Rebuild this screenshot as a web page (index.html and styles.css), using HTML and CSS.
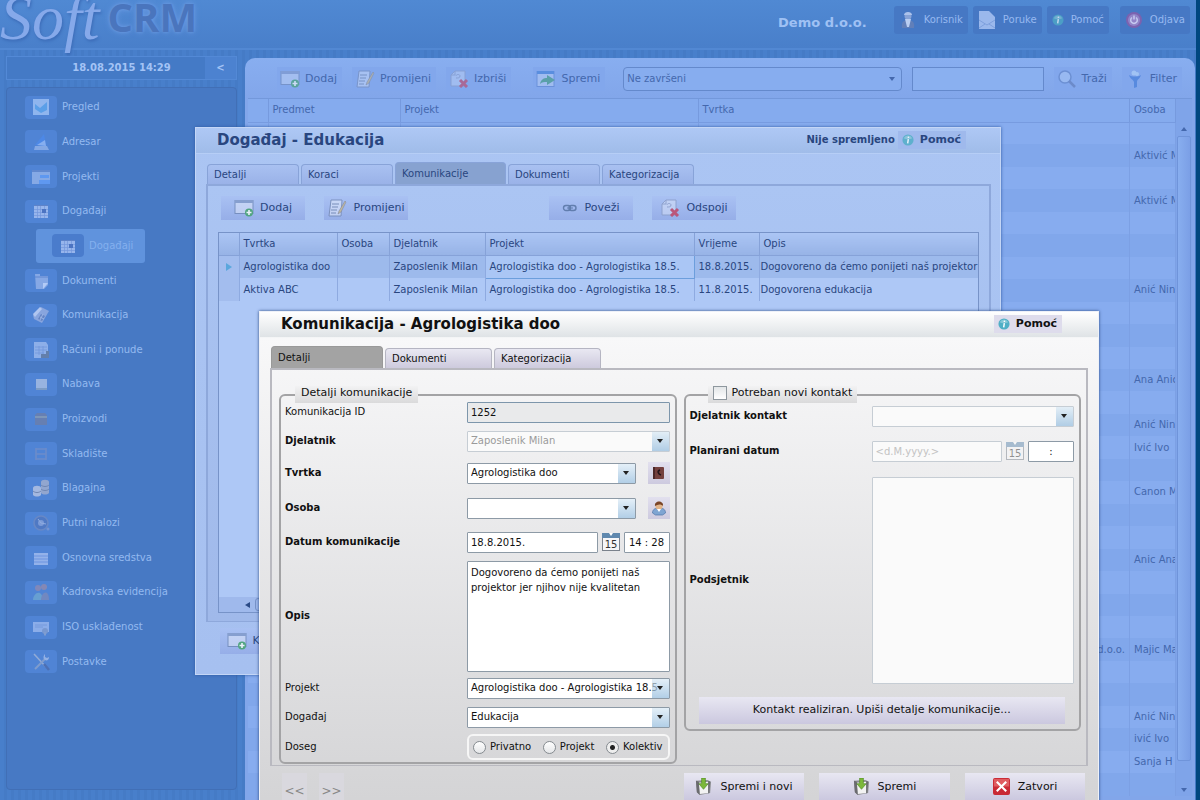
FILE: index.html
```html
<!DOCTYPE html>
<html lang="hr">
<head>
    <meta charset="UTF-8">
    <meta name="viewport" content="width=device-width, initial-scale=1.0">
    <title>SoftCRM</title>
    <link rel="stylesheet" href="styles.css">
</head>
<body>
    <!-- icons -->
    <svg class="sprite" aria-hidden="true">
        <symbol id="i-add" viewBox="0 0 20 18">
            <rect x="1" y="1.500" width="18" height="13" fill="#fff" fill-opacity=".45" stroke="#6f87b5"/>
            <rect x="1" y="1" width="18" height="3" fill="#7f98c8"/>
            <circle cx="15" cy="13.500" r="4" fill="#3fa267"/>
            <path d="M15 11v5M12.500 13.500h5" stroke="#fff" stroke-width="1.600"/>
        </symbol>
        <symbol id="i-edit" viewBox="0 0 20 18">
            <path d="M4 1h11l-1 16H2z" fill="#fff" fill-opacity=".5" stroke="#7388b3"/>
            <path d="M5 5h7M5 8h6M4 11h6M4 14h5" stroke="#6f84ad"/>
            <path d="M18 2l-6 10-1 3 3-2 5-10z" fill="#c9b98a" stroke="#7d7f8c" stroke-width=".6"/>
        </symbol>
        <symbol id="i-del" viewBox="0 0 20 18">
            <path d="M6 1h10v15H2V5z" fill="#fff" fill-opacity=".4" stroke="#8a9cc6"/>
            <path d="M2 5h4V1M7 6c0-2 4-2 4 0s-2 2-4 2" fill="none" stroke="#8a9cc6"/>
            <path d="M11 10l7 7M18 10l-7 7" stroke="#c2405f" stroke-width="3"/>
        </symbol>
        <symbol id="i-save2" viewBox="0 0 20 18">
            <rect x="1" y="1.500" width="17" height="15" fill="#fff" fill-opacity=".4" stroke="#5c84cf"/>
            <rect x="1" y="1" width="17" height="3" fill="#3f7fd8"/>
            <path d="M4 14c1-5 4-6 7-6V5l8 5-8 5v-3c-3 0-5 0-7 2z" fill="#419c7d"/>
        </symbol>
        <symbol id="i-find" viewBox="0 0 20 18">
            <circle cx="8" cy="7" r="6" fill="#a8c6f5" stroke="#5f82c4" stroke-width="1.500"/>
            <path d="M12 11l6 6" stroke="#5f79b5" stroke-width="2.500"/>
        </symbol>
        <symbol id="i-filter" viewBox="0 0 20 18">
            <circle cx="9" cy="3" r="2.500" fill="#b5d6fa"/><circle cx="12" cy="4" r="2" fill="#b5d6fa"/>
            <path d="M4 5c3 2 9 2 12 0-1 4-4 4-4 7v5l-3 1v-6C8 9 5 9 4 5z" fill="#3c78d8"/>
        </symbol>
        <symbol id="i-info" viewBox="0 0 14 14">
            <circle cx="7" cy="7" r="6.500" fill="#4fafc6"/><path d="M2 5a5.500 5.500 0 0 1 10 0c-3 1.500-7 1.500-10 0z" fill="#fff" fill-opacity=".3"/>
            <circle cx="7.500" cy="3.800" r="1" fill="#fff"/><path d="M7.400 6l-.8 5" stroke="#fff" stroke-width="1.700"/>
        </symbol>
        <symbol id="i-link" viewBox="0 0 16 12">
            <rect x="1.500" y="3.500" width="7" height="5" rx="2.500" fill="none" stroke="#53709f" stroke-width="1.400"/>
            <rect x="7" y="3.500" width="7" height="5" rx="2.500" fill="none" stroke="#53709f" stroke-width="1.400"/>
            <path d="M5 6h6" stroke="#53709f"/>
        </symbol>
        <symbol id="i-user" viewBox="0 0 18 18">
            <circle cx="9" cy="5" r="3.500" fill="#8fa8da"/><path d="M5 4c0-4 8-4 8 0" fill="#b7cbf0"/>
            <path d="M3 17c-1-6 2-8 6-8s7 2 6 8z" fill="#6480b8"/><path d="M6 8h6l-2 8H8z" fill="#c6d8f7"/>
        </symbol>
        <symbol id="i-mail" viewBox="0 0 18 18">
            <path d="M1 0h10l6 6v12H1z" fill="#a4c0f1"/><path d="M1 9l8 5 8-5M1 17l6-4M17 17l-6-4" fill="none" stroke="#83a4e0"/>
        </symbol>
        <symbol id="i-power" viewBox="0 0 18 18">
            <circle cx="9" cy="9" r="8" fill="#8260ad"/><circle cx="9" cy="9" r="6" fill="#9a86c9"/>
            <path d="M7 6.500a3.300 3.300 0 1 0 4 0M9 4.500v4" fill="none" stroke="#d3d3f5" stroke-width="1.500"/>
        </symbol>
        <symbol id="i-book" viewBox="0 0 16 16">
            <rect x="2" y="2" width="11" height="12" rx="1" fill="#74403e"/><path d="M2 2h2v12H2z" fill="#4c2829"/>
            <path d="M9 5c-3 1-2 4 1 5" fill="none" stroke="#24141a" stroke-width="1.600"/>
        </symbol>
        <symbol id="i-person" viewBox="0 0 16 16">
            <path d="M1.500 13c0-4 3-5 6.500-5s6.500 1 6.500 5l-3 2h-7z" fill="#7fa5d2" stroke="#4f74a8" stroke-width=".7"/>
            <circle cx="8" cy="6" r="3.600" fill="#e2b58b"/><path d="M4 6C3 0 13 0 12 6c-2-2-5-2-8 0z" fill="#7a4527"/>
            <path d="M6 9l2 3 2-3z" fill="#fff"/>
        </symbol>
        <symbol id="i-cal" viewBox="0 0 18 18">
            <rect x=".5" y="1.500" width="17" height="16" fill="#f6f6f8" stroke="#7b828c"/>
            <rect x="0" y="0" width="18" height="5" fill="#5f88ae"/><path d="M7 0h4l-2 3z" fill="#fff"/>
            <text x="9" y="15" text-anchor="middle" class="cal-day">15</text>
        </symbol>
        <symbol id="i-disk" viewBox="0 0 18 18">
            <path d="M1 3l12-1 4 2-1 12-11 2-3-3z" fill="#8b8c90"/><path d="M4 5l10-1v12l-9 1z" fill="#f2f2f2"/>
            <path d="M1 3l3 1 1 14-3-3zM14 3l2 1-1 12-1 .500z" fill="#6a6b6f"/>
            <path d="M7 0h4v6h3l-5 6-5-6h3z" fill="#7cb83a" stroke="#44801b" stroke-width=".6"/>
        </symbol>
        <symbol id="i-close" viewBox="0 0 18 18">
            <rect x="0" y="0" width="18" height="18" rx="2" fill="#c92a35"/><path d="M1 1h16v8H1z" fill="#df5c60"/>
            <path d="M4 4l10 10M14 4L4 14" stroke="#fff" stroke-width="2.200"/>
        </symbol>
        <!-- side menu -->
        <symbol id="m-pregled" viewBox="0 0 18 18"><rect x="1" y="1" width="16" height="16" fill="#8fb5ee"/><path d="M3 6l5 4 7-6v8l-6 3-6-4z" fill="#5b9fe8"/></symbol>
        <symbol id="m-adresar" viewBox="0 0 18 18"><path d="M3 12l9-11 2 12z" fill="#4d88e6"/><path d="M5 12l8-5 1 6z" fill="#86aeef"/><path d="M3 13h12l2 4H2z" fill="#84a8e4"/></symbol>
        <symbol id="m-projekti" viewBox="0 0 18 18"><path d="M0 2h18v14H0z" fill="#86a9e5"/><path d="M0 2h18v2H0z" fill="#6188ce"/><path d="M8 7h9v3H8zM7 12h11v4H7z" fill="#5f98f0"/></symbol>
        <symbol id="m-kalendar" viewBox="0 0 18 18"><rect x="2" y="3" width="14" height="13" fill="#97b5ec"/><path d="M2 3.500h14" stroke="#5f83c8"/><path d="M2 7.500h14M2 10.500h14M2 13.500h14M5.500 4v12M8.500 4v12M12.500 4v12" stroke="#7297dc" stroke-width=".7"/><path d="M10 7h4v4h-4z" fill="#4c74c2"/></symbol>
        <symbol id="m-dokumenti" viewBox="0 0 18 18"><path d="M3 2h5v2h8v9l-4 4H4z" fill="#86a8e5"/><path d="M16 11h-5v6z" fill="#b3cbf6"/><path d="M3 5h13" stroke="#5f86d0"/></symbol>
        <symbol id="m-telefon" viewBox="0 0 18 18"><path d="M1 9l8-8 8 4-7 12-8-4z" fill="#88a5de"/><path d="M1 8l7-7 2 2-7 8z" fill="#b0c6f0"/><path d="M9 8l4 2-3 5-4-2z" fill="#6484c4"/><path d="M8 11l4 2M11 8l-3 6" stroke="#9bb4e5"/></symbol>
        <symbol id="m-racuni" viewBox="0 0 18 18"><path d="M2 1h12l2 3v13H2z" fill="#8dafe9"/><path d="M3 6h12M3 9h12M3 12h9M7 5v9M11 5v9" stroke="#7197da" stroke-width=".8"/><path d="M9 17v-4h5v-3h3v7z" fill="#637fab"/></symbol>
        <symbol id="m-nabava" viewBox="0 0 18 18"><rect x="4" y="4" width="11" height="11" fill="#97b3e0"/><path d="M4 14h11" stroke="#7293bd" stroke-width="1.500"/></symbol>
        <symbol id="m-proizvodi" viewBox="0 0 18 18"><path d="M3 5l2-2h8l2 2v10H3z" fill="#667fb2"/><path d="M3 6h12v2H3z" fill="#7d96b8"/></symbol>
        <symbol id="m-skladiste" viewBox="0 0 18 18"><path d="M4 3v12M14 3v12M4 4h10M4 9h10M4 14h10" stroke="#6c8cca" stroke-width="1.600"/></symbol>
        <symbol id="m-blagajna" viewBox="0 0 18 18"><path d="M9 3c0-3 8-3 8 0v11c-2 2-6 2-8 0z" fill="#92a6cf"/><path d="M1 9c0-3 8-3 8 0v7c-2 2-6 2-8 0z" fill="#a3b8e0"/><path d="M9 6c2 2 6 2 8 0M9 10c2 2 6 2 8 0M1 12c2 2 6 2 8 0" fill="none" stroke="#7187b2"/></symbol>
        <symbol id="m-putni" viewBox="0 0 18 18"><circle cx="9" cy="9" r="7" fill="#4f79c4" stroke="#6788c6" stroke-width="1.600"/><circle cx="9" cy="9" r="3" fill="#7b9bd8"/><path d="M9 9l5 1M6 5l3 4" stroke="#8fabdf"/><circle cx="16" cy="15" r="1.500" fill="#7494d2"/></symbol>
        <symbol id="m-osnovna" viewBox="0 0 18 18"><rect x="2" y="4" width="14" height="12" fill="#93b2ea"/><path d="M2 7h14M2 10h14M2 13h14" stroke="#6d94e0"/></symbol>
        <symbol id="m-kadrovi" viewBox="0 0 18 18"><circle cx="6" cy="5" r="3" fill="#8088ba"/><circle cx="12" cy="4" r="3" fill="#8488b5"/><path d="M1 17c0-7 9-12 10 0z" fill="#679fd2"/><path d="M9 17c0-8 8-12 8 0z" fill="#7188c0"/></symbol>
        <symbol id="m-iso" viewBox="0 0 18 18"><rect x="1" y="4" width="16" height="10" fill="#8bade9"/><path d="M3 7h12M3 9h8" stroke="#7599dc"/><circle cx="13" cy="13" r="3" fill="#7898d0"/><path d="M12 14v4l1-1 1 1v-4z" fill="#7f9dd0"/></symbol>
        <symbol id="m-postavke" viewBox="0 0 18 18"><path d="M2 1l12 13" stroke="#92abd6" stroke-width="1.500"/><path d="M12 11l5 6" stroke="#4d70b4" stroke-width="2.600"/><path d="M3 16L13 6" stroke="#7f9ccd" stroke-width="2"/><path d="M13 1c-2 2-2 5 0 6s4 0 4-3l-2 1-2-1z" fill="#92b0e4"/></symbol>
    </svg>

    <div class="app">
        <header class="header">
            <h1 class="logo"><span class="logo-soft">Soft</span><span class="logo-crm">CRM</span></h1>
            <strong class="company">Demo d.o.o.</strong>
            <nav class="top-nav">
                <button type="button"><svg><use href="#i-user"/></svg>Korisnik</button>
                <button type="button"><svg><use href="#i-mail"/></svg>Poruke</button>
                <button type="button"><svg class="small"><use href="#i-info"/></svg>Pomoć</button>
                <button type="button" class="logout"><svg><use href="#i-power"/></svg>Odjava</button>
            </nav>
        </header>

        <div class="layout">
            <aside class="side">
                <div class="clock"><time>18.08.2015 14:29</time><button type="button">&lt;</button></div>
                <nav class="menu">
                    <ul>
                        <li><a href="#"><span class="ico"><svg><use href="#m-pregled"/></svg></span>Pregled</a></li>
                        <li><a href="#"><span class="ico"><svg><use href="#m-adresar"/></svg></span>Adresar</a></li>
                        <li><a href="#"><span class="ico"><svg><use href="#m-projekti"/></svg></span>Projekti</a></li>
                        <li><a href="#"><span class="ico"><svg><use href="#m-kalendar"/></svg></span>Događaji</a></li>
                        <li class="sub"><a href="#"><span class="ico"><svg><use href="#m-kalendar"/></svg></span>Događaji</a></li>
                        <li><a href="#"><span class="ico"><svg><use href="#m-dokumenti"/></svg></span>Dokumenti</a></li>
                        <li><a href="#"><span class="ico"><svg><use href="#m-telefon"/></svg></span>Komunikacija</a></li>
                        <li><a href="#"><span class="ico"><svg><use href="#m-racuni"/></svg></span>Računi i ponude</a></li>
                        <li><a href="#"><span class="ico"><svg><use href="#m-nabava"/></svg></span>Nabava</a></li>
                        <li><a href="#"><span class="ico"><svg><use href="#m-proizvodi"/></svg></span>Proizvodi</a></li>
                        <li><a href="#"><span class="ico"><svg><use href="#m-skladiste"/></svg></span>Skladište</a></li>
                        <li><a href="#"><span class="ico"><svg><use href="#m-blagajna"/></svg></span>Blagajna</a></li>
                        <li><a href="#"><span class="ico"><svg><use href="#m-putni"/></svg></span>Putni nalozi</a></li>
                        <li><a href="#"><span class="ico"><svg><use href="#m-osnovna"/></svg></span>Osnovna sredstva</a></li>
                        <li><a href="#"><span class="ico"><svg><use href="#m-kadrovi"/></svg></span>Kadrovska evidencija</a></li>
                        <li><a href="#"><span class="ico"><svg><use href="#m-iso"/></svg></span>ISO usklađenost</a></li>
                        <li><a href="#"><span class="ico"><svg><use href="#m-postavke"/></svg></span>Postavke</a></li>
                    </ul>
                </nav>
            </aside>

            <main class="main">
                <div class="toolbar">
                    <button type="button"><svg><use href="#i-add"/></svg>Dodaj</button>
                    <button type="button"><svg><use href="#i-edit"/></svg>Promijeni</button>
                    <button type="button"><svg><use href="#i-del"/></svg>Izbriši</button>
                    <button type="button" class="save"><svg><use href="#i-save2"/></svg>Spremi</button>
                    <div class="combo filter-combo">
                        <select aria-label="Status"><option>Ne završeni</option></select>
                    </div>
                    <input type="text" class="search" aria-label="Traži">
                    <button type="button"><svg><use href="#i-find"/></svg>Traži</button>
                    <button type="button"><svg><use href="#i-filter"/></svg>Filter</button>
                </div>
                <div class="grid-area">
                    <table class="grid">
                        <colgroup><col class="c-sel"><col class="c-predmet"><col class="c-projekt"><col><col class="c-osoba"></colgroup>
                        <thead><tr><th></th><th>Predmet</th><th>Projekt</th><th>Tvrtka</th><th>Osoba</th></tr></thead>
                        <tbody>
                            <tr><td></td><td></td><td></td><td></td><td></td></tr>
                            <tr><td></td><td></td><td></td><td></td><td>Aktivić Marko</td></tr>
                            <tr><td></td><td></td><td></td><td></td><td></td></tr>
                            <tr><td></td><td></td><td></td><td></td><td>Aktivić Marko</td></tr>
                            <tr><td></td><td></td><td></td><td></td><td></td></tr>
                            <tr><td></td><td></td><td></td><td></td><td></td></tr>
                            <tr><td></td><td></td><td></td><td></td><td></td></tr>
                            <tr><td></td><td></td><td></td><td></td><td>Anić Nina</td></tr>
                            <tr><td></td><td></td><td></td><td></td><td></td></tr>
                            <tr><td></td><td></td><td></td><td></td><td></td></tr>
                            <tr><td></td><td></td><td></td><td></td><td></td></tr>
                            <tr><td></td><td></td><td></td><td></td><td>Ana Anić</td></tr>
                            <tr><td></td><td></td><td></td><td></td><td></td></tr>
                            <tr><td></td><td></td><td></td><td></td><td>Anić Nina</td></tr>
                            <tr><td></td><td></td><td></td><td></td><td>Ivić Ivo</td></tr>
                            <tr><td></td><td></td><td></td><td></td><td></td></tr>
                            <tr><td></td><td></td><td></td><td></td><td>Canon M</td></tr>
                            <tr><td></td><td></td><td></td><td></td><td></td></tr>
                            <tr><td></td><td></td><td></td><td></td><td></td></tr>
                            <tr><td></td><td></td><td></td><td></td><td>Anic Ana</td></tr>
                            <tr><td></td><td></td><td></td><td></td><td></td></tr>
                            <tr><td></td><td></td><td></td><td></td><td></td></tr>
                            <tr><td></td><td></td><td></td><td></td><td></td></tr>
                            <tr><td></td><td></td><td></td><td class="right">d.o.o.</td><td>Majic Maja</td></tr>
                            <tr><td></td><td></td><td></td><td></td><td></td></tr>
                            <tr><td></td><td></td><td></td><td></td><td></td></tr>
                            <tr><td></td><td></td><td></td><td></td><td>Anić Nina</td></tr>
                            <tr><td></td><td></td><td></td><td></td><td>ivić Ivo</td></tr>
                            <tr><td></td><td></td><td></td><td></td><td>Sanja H</td></tr>
                            <tr><td></td><td></td><td></td><td></td><td></td></tr>
                        </tbody>
                    </table>
                    <div class="vscroll"><i class="arrow up"></i><i class="thumb"></i><i class="arrow"></i></div>
                </div>
            </main>
        </div>

        <!-- event window -->
        <section class="window event">
            <header class="title-bar">
                <h2>Događaj - Edukacija</h2>
                <span class="unsaved">Nije spremljeno</span>
                <button type="button" class="help"><svg><use href="#i-info"/></svg>Pomoć</button>
            </header>
            <div class="tabs">
                <button type="button">Detalji</button>
                <button type="button">Koraci</button>
                <button type="button" class="active">Komunikacije</button>
                <button type="button">Dokumenti</button>
                <button type="button">Kategorizacija</button>
            </div>
            <div class="tab-panel">
                <div class="actions">
                    <button type="button"><svg><use href="#i-add"/></svg>Dodaj</button>
                    <button type="button"><svg><use href="#i-edit"/></svg>Promijeni</button>
                    <button type="button" class="connect"><svg class="link"><use href="#i-link"/></svg>Poveži</button>
                    <button type="button"><svg><use href="#i-del"/></svg>Odspoji</button>
                </div>
                <div class="list">
                    <table>
                        <colgroup><col class="c-mark"><col class="c-tvrtka"><col class="c-os"><col class="c-djelatnik"><col class="c-proj"><col class="c-vrijeme"><col></colgroup>
                        <thead><tr><th></th><th>Tvrtka</th><th>Osoba</th><th>Djelatnik</th><th>Projekt</th><th>Vrijeme</th><th>Opis</th></tr></thead>
                        <tbody>
                            <tr class="selected"><td><i class="marker"></i></td><td>Agrologistika doo</td><td></td><td>Zaposlenik Milan</td><td class="focus">Agrologistika doo - Agrologistika 18.5.</td><td>18.8.2015.</td><td class="desc">Dogovoreno da ćemo ponijeti naš projektor</td></tr>
                            <tr><td></td><td>Aktiva ABC</td><td></td><td>Zaposlenik Milan</td><td>Agrologistika doo - Agrologistika 18.5.</td><td>11.8.2015.</td><td class="desc">Dogovorena edukacija</td></tr>
                        </tbody>
                    </table>
                    <div class="hscroll"><i class="arrow left"></i><i class="thumb"></i></div>
                </div>
            </div>
            <footer class="event-foot">
                <button type="button"><svg><use href="#i-add"/></svg>Komunikacija</button>
            </footer>
        </section>

        <!-- communication window -->
        <form class="window comm">
            <header class="title-bar">
                <h2>Komunikacija - Agrologistika doo</h2>
                <button type="button" class="help"><svg><use href="#i-info"/></svg>Pomoć</button>
            </header>
            <div class="tabs">
                <button type="button" class="active">Detalji</button>
                <button type="button">Dokumenti</button>
                <button type="button">Kategorizacija</button>
            </div>
            <div class="tab-panel">
                <fieldset>
                    <legend>Detalji komunikacije</legend>
                    <div class="fields details">
                        <label for="kid">Komunikacija ID</label>
                        <input type="text" id="kid" class="readonly" value="1252" readonly>

                        <label for="djelatnik" class="req">Djelatnik</label>
                        <div class="combo off"><select id="djelatnik" disabled><option>Zaposlenik Milan</option></select></div>

                        <label for="tvrtka" class="req">Tvrtka</label>
                        <div class="line wide">
                            <div class="combo"><select id="tvrtka"><option>Agrologistika doo</option></select></div>
                            <button type="button" class="icon-btn" aria-label="Adresar"><svg><use href="#i-book"/></svg></button>
                        </div>

                        <label for="osoba" class="req">Osoba</label>
                        <div class="line wide">
                            <div class="combo"><select id="osoba"><option></option></select></div>
                            <button type="button" class="icon-btn" aria-label="Osobe"><svg><use href="#i-person"/></svg></button>
                        </div>

                        <label for="datum" class="req">Datum komunikacije</label>
                        <div class="line">
                            <input type="text" id="datum" value="18.8.2015.">
                            <button type="button" class="cal-btn" aria-label="Kalendar"><svg><use href="#i-cal"/></svg></button>
                            <input type="text" class="time" value="14 : 28" aria-label="Vrijeme">
                        </div>

                        <label for="opis" class="req">Opis</label>
                        <textarea id="opis">Dogovoreno da ćemo ponijeti naš projektor jer njihov nije kvalitetan</textarea>

                        <label for="projekt">Projekt</label>
                        <div class="combo"><select id="projekt"><option>Agrologistika doo - Agrologistika 18.5</option></select></div>

                        <label for="dogadjaj">Događaj</label>
                        <div class="combo"><select id="dogadjaj"><option>Edukacija</option></select></div>

                        <span>Doseg</span>
                        <div class="scope" role="radiogroup" aria-label="Doseg">
                            <label><input type="radio" name="doseg">Privatno</label>
                            <label><input type="radio" name="doseg">Projekt</label>
                            <label><input type="radio" name="doseg" checked>Kolektiv</label>
                        </div>
                    </div>
                </fieldset>

                <fieldset class="next">
                    <legend><label><input type="checkbox">Potreban novi kontakt</label></legend>
                    <div class="fields contact">
                        <label for="kontakt" class="req">Djelatnik kontakt</label>
                        <div class="combo off"><select id="kontakt"><option></option></select></div>

                        <label for="plan" class="req">Planirani datum</label>
                        <div class="line">
                            <input type="text" id="plan" class="off" placeholder="&lt;d.M.yyyy.&gt;">
                            <button type="button" class="cal-btn off" aria-label="Kalendar"><svg><use href="#i-cal"/></svg></button>
                            <input type="text" class="time" value=":" aria-label="Vrijeme">
                        </div>

                        <label for="podsjetnik" class="req">Podsjetnik</label>
                        <textarea id="podsjetnik" class="off"></textarea>

                        <button type="button" class="btn done">Kontakt realiziran. Upiši detalje komunikacije...</button>
                    </div>
                </fieldset>
            </div>
            <footer class="form-foot">
                <button type="button" class="step">&lt;&lt;</button>
                <button type="button" class="step">&gt;&gt;</button>
                <div class="submit">
                    <button type="button" class="btn"><svg><use href="#i-disk"/></svg>Spremi i novi</button>
                    <button type="button" class="btn mid"><svg><use href="#i-disk"/></svg>Spremi</button>
                    <button type="button" class="btn"><svg><use href="#i-close"/></svg>Zatvori</button>
                </div>
            </footer>
        </form>
    </div>
</body>
</html>
```
FILE: styles.css
```css
* {
    box-sizing: border-box;
}

body {
    margin: 0;
    font-family: "DejaVu Sans", Verdana, sans-serif;
    font-size: 10px;
    line-height: 16px;
    overflow: hidden;
}

button, input, select, textarea {
    font: inherit;
    color: inherit;
    margin: 0;
}

button {
    display: flex;
    align-items: center;
    border: 0;
    padding: 0;
    background: none;
    cursor: pointer;
    white-space: nowrap;
}

h1, h2 {
    margin: 0;
}

.sprite {
    position: absolute;
    width: 0;
    height: 0;
}

.cal-day {
    font-size: 10px;
    fill: #333;
}

.app {
    position: relative;
    display: flex;
    flex-direction: column;
    height: 100vh;
    border-right: 4px solid #00477f;
    background: repeating-linear-gradient(90deg, #487fcb 0, #487fcb 4px, #457bc6 4px, #457bc6 7px);
    overflow: hidden;
}

/* header */
.header {
    display: flex;
    align-items: flex-start;
    height: 50px;
    padding: 6px 6px 0 0;
    background: linear-gradient(#5089d3, #497fca);
    border-bottom: 2px solid #5288d3;
}

.logo {
    display: flex;
    align-items: flex-start;
    gap: 8px;
    flex: 1;
    height: 28px;
    font-weight: normal;
}

.logo-soft {
    font: italic 64px/24px "Liberation Serif", serif;
    color: #86a9ea;
    text-shadow: 1px 2px 3px #3c6cb8;
}

.logo-crm {
    font: bold 40px/22px "Open Sans", sans-serif;
    color: #4a75bd;
    text-shadow: 0 0 3px #6a9ae2, 0 0 6px #6a9ae2;
}

.company {
    margin-right: 27px;
    font-size: 13px;
    line-height: 34px;
    color: #9fc1f4;
}

.top-nav {
    display: flex;
    gap: 5px;
}

.top-nav button {
    height: 28px;
    padding: 0 5px;
    gap: 7px;
    border-radius: 3px;
    background: #4678c4;
    color: #96b8f0;
}

.top-nav svg {
    width: 18px;
    height: 20px;
    opacity: .9;
}

.top-nav .small {
    width: 12px;
    opacity: .7;
}

.top-nav .logout {
    margin-left: 6px;
}

/* sidebar */
.layout {
    display: flex;
    flex: 1;
    min-height: 0;
    gap: 8px;
    padding: 6px 1px 0 6px;
}

.side {
    display: flex;
    flex-direction: column;
    flex: 0 0 231px;
    gap: 7px;
    padding-bottom: 10px;
}

.clock {
    display: flex;
    height: 24px;
    border: 1px solid #5389d6;
    background: #447ac6;
    color: #a3c3f5;
    font-weight: bold;
    line-height: 22px;
    text-align: center;
}

.clock time {
    flex: 1;
    padding-left: 31px;
}

.clock button {
    width: 31px;
    justify-content: center;
    background: #4c82d0;
}

.menu {
    display: flex;
    flex: 1;
    padding: 2px 0 110px;
    border: 1px solid #416fb6;
    border-radius: 4px;
    background: #4779c4;
}

.menu ul {
    display: grid;
    grid-auto-rows: 1fr;
    flex: 1;
    margin: 0;
    padding: 0 0 0 18px;
    list-style: none;
}

.menu a {
    display: flex;
    align-items: center;
    gap: 5px;
    height: 100%;
    color: #94b9f0;
    text-decoration: none;
}

.ico {
    display: flex;
    justify-content: center;
    align-items: center;
    width: 32px;
    height: 23px;
    border-radius: 4px;
    background: #5084d5;
}

.ico svg {
    width: 18px;
    height: 18px;
}

.menu .sub {
    width: 109px;
    margin-left: 11px;
    padding-left: 16px;
    border-radius: 3px;
    background: #6093dd;
}

.menu .sub .ico {
    background: #4a7ccc;
}

.menu .sub a {
    color: #84b0ee;
}

/* main list */
.main {
    flex: 1;
    display: flex;
    flex-direction: column;
    min-width: 0;
    margin-top: 2px;
    padding: 0 3px;
    border-radius: 10px 10px 0 0;
    background: linear-gradient(#88aef0, #82a6ea 40px);
    color: #4468ad;
}

.toolbar {
    display: flex;
    align-items: center;
    gap: 10px;
    height: 40px;
    padding: 2px 10px 0 29px;
    font-size: 11px;
}

.toolbar button {
    height: 24px;
    padding: 0 5px 0 3px;
    gap: 5px;
    background: #82a7ec;
}

.toolbar svg {
    width: 20px;
    height: 18px;
    opacity: .6;
}

.toolbar .save {
    margin-left: 12px;
}

.filter-combo {
    flex: 1;
    margin-left: 8px;
    font-size: 10px;
}

.toolbar .filter-combo select {
    height: 24px;
    border: 1px solid #6489cc;
    border-radius: 4px;
    background: #87adef;
}

.toolbar .filter-combo::before {
    background: none;
}

.toolbar .filter-combo::after {
    border-top-color: #4468ad;
}

.search {
    width: 132px;
    height: 24px;
    border: 1px solid #6489cc;
    background: #8ab0f0;
}

.grid-area {
    display: flex;
    flex: 1;
    min-height: 0;
    padding-bottom: 4px;
    border-top: 1px solid #7398db;
}

table {
    width: 100%;
    border-collapse: collapse;
    table-layout: fixed;
}

th, td {
    padding: 0 0 0 4px;
    font-weight: normal;
    text-align: left;
    white-space: nowrap;
    overflow: hidden;
}

.grid {
    flex: 1;
    height: 100%;
}

.grid th {
    height: 23px;
    border-right: 1px solid #769ade;
    border-bottom: 1px solid #779be0;
    background: #85abee;
}

.grid td {
    height: 22px;
    line-height: 14px;
    border-right: 1px solid #7ca0e4;
}

.grid tbody tr:nth-child(even) {
    background: #81a7eb;
}

.grid tbody tr:nth-child(odd) {
    background: #87acef;
}

.grid .right {
    text-align: right;
    padding-right: 4px;
}

.c-sel {
    width: 20px;
}

.c-predmet {
    width: 132px;
}

.c-projekt {
    width: 298px;
}

.c-osoba {
    width: 46px;
}

.vscroll {
    display: flex;
    flex-direction: column;
    align-items: center;
    gap: 5px;
    width: 16px;
    padding: 28px 1px 4px;
    background: #7fa4e9;
}

.vscroll .thumb {
    flex: 1;
    width: 100%;
    margin-bottom: 22px;
    border: 1px solid #6f94da;
    border-radius: 2px;
    background: linear-gradient(90deg, #88aeef, #7b9fe6);
}

.arrow {
    border: 3px solid transparent;
    border-top: 4px solid #4468ad;
    border-bottom: 0;
}

.arrow.up {
    border-top: 0;
    border-bottom: 4px solid #4468ad;
}

.arrow.left {
    border: 3px solid transparent;
    border-right: 5px solid #2a4a86;
    border-left: 0;
}

/* windows */
.window {
    position: absolute;
    display: flex;
    flex-direction: column;
}

.title-bar {
    display: flex;
    align-items: center;
    height: 26px;
    padding: 0 36px 2px 21px;
}

.title-bar h2 {
    flex: 1;
    font-size: 15px;
    line-height: 24px;
}

.help {
    height: 18px;
    padding: 0 5px 0 4px;
    gap: 6px;
    font-size: 11px;
    font-weight: bold;
}

.help svg {
    width: 12px;
    height: 12px;
}

.tabs {
    display: flex;
    align-items: flex-end;
    gap: 2px;
    height: 30px;
    padding-left: 1px;
}

.tabs button {
    align-items: center;
    width: 92px;
    height: 20px;
    padding: 0 6px;
    border: 1px solid;
    border-bottom: 0;
    border-radius: 4px 4px 0 0;
}

.tabs .active {
    width: 111px;
    height: 22px;
}

.event {
    left: 195px;
    right: 195px;
    top: 127px;
    height: 548px;
    padding: 0 9px 0 10px;
    border: 1px solid #c4d6f6;
    background: linear-gradient(#abc5f3, #a6c0f0);
    box-shadow: 0 0 3px #2f5ba4;
    color: #29467f;
}

.event .title-bar {
    margin: 0 -9px 0 -10px;
    padding-right: 34px;
    background: linear-gradient(#aec8f5, #a0bce9);
    border-bottom: 1px solid #b6cef6;
}

.unsaved {
    margin-right: 3px;
    font-weight: bold;
}

.event .help {
    background: #9fb9ec;
}

.event svg {
    opacity: .8;
}

.event .tabs button {
    border-color: #88a3d8;
    background: linear-gradient(#a9c1f1, #9ab2e8);
}

.event .tabs .active {
    background: #87a2d0;
}

.event .tab-panel {
    display: flex;
    flex-direction: column;
    flex: 1;
    padding: 10px 10px 8px;
    border: 2px solid #8ea8db;
    border-bottom-width: 1px;
    background: linear-gradient(#abc5f3, #a0b9ea);
}

.actions {
    display: flex;
    gap: 19px;
    padding-left: 3px;
    margin-bottom: 12px;
}

.actions button, .event-foot button {
    justify-content: center;
    gap: 6px;
    width: 84px;
    height: 24px;
    background: linear-gradient(#a9c1f3, #96aee8);
    font-size: 11px;
}

.actions svg, .event-foot svg {
    width: 20px;
    height: 18px;
    flex: none;
}

.actions .link {
    width: 16px;
    height: 12px;
}

.actions .connect {
    margin-left: 122px;
}

.list {
    display: flex;
    flex-direction: column;
    flex: 1;
    justify-content: space-between;
    border: 1px solid #7793c8;
    background: #aec8f6;
}

.list th {
    height: 22px;
    border-right: 1px solid #86a2d8;
    border-bottom: 1px solid #86a2d8;
    background: linear-gradient(#abc5f4, #97b3e6);
}

.list td {
    height: 23px;
    border-right: 1px solid #8eaae0;
}

.list td:first-child {
    background: #a3bdee;
}

.list th:last-child, .list td:last-child {
    border-right: 0;
}

.list .selected {
    background: #9dbaec;
}

.list .focus {
    border: 1px solid #6c9edc;
    background: #aac6f5;
}

.list .desc {
    padding-left: 1px;
}

.c-mark {
    width: 20px;
}

.c-tvrtka {
    width: 98px;
}

.c-os {
    width: 52px;
}

.c-djelatnik {
    width: 96px;
}

.c-proj {
    width: 209px;
}

.c-vrijeme {
    width: 65px;
}

.marker {
    display: block;
    width: 0;
    margin-left: 3px;
    border: 4px solid transparent;
    border-left: 6px solid #5aa7dd;
    border-right: 0;
}

.hscroll {
    display: flex;
    align-items: center;
    gap: 5px;
    height: 15px;
    padding-left: 26px;
    background: #9fb9ec;
}

.hscroll .thumb {
    width: 400px;
    height: 13px;
    border: 1px solid #7793c8;
    border-radius: 3px;
}

.event-foot {
    height: 52px;
    padding: 6px 14px;
}

.event-foot button {
    height: 26px;
    width: 112px;
}

/* communication form */
.comm {
    left: 259px;
    right: 97px;
    top: 311px;
    padding: 0 10px;
    border: 1px solid #eef1f8;
    background: linear-gradient(#fafafb, #d3d3d5);
    box-shadow: 0 0 3px #2b4a80;
    color: #111;
}

.comm .title-bar {
    margin: 0 -10px;
    background: linear-gradient(#fff, #dfe3e6);
    border-bottom: 1px solid #f4f5f6;
}

.comm .help {
    background: #dedcec;
}

.comm .tabs button {
    width: 107px;
    border-color: #b5b5c2;
    background: linear-gradient(#e9e8f2, #cdcadd);
}

.comm .tabs .active {
    width: 112px;
    border-color: #999;
    background: #a3a3a3;
}

.comm .tab-panel {
    display: grid;
    grid-template-columns: 1fr 1fr;
    align-items: start;
    gap: 7px;
    padding: 16px 5px 1px 7px;
    border: 2px solid #b9b9c0;
    border-bottom-width: 1px;
}

fieldset {
    min-width: 0;
    margin: 0;
    padding: 0 5px 0 4px;
    border: 2px solid #a3a3a5;
    border-radius: 6px;
}

legend {
    height: 17px;
    margin-left: 10px;
    padding: 0 6px;
    background: linear-gradient(#f2f2f3, #dadadb);
    font-size: 11px;
    line-height: 14px;
}

legend label {
    display: flex;
    align-items: center;
    gap: 5px;
}

.next legend {
    margin-left: 18px;
    padding: 0 5px;
}

input[type="checkbox"] {
    appearance: none;
    width: 14px;
    height: 14px;
    border: 1px solid #8e979e;
    background: linear-gradient(#e3e6e8, #fff);
}

.fields {
    display: grid;
    grid-template-columns: 182px 1fr;
    align-items: center;
}

.details {
    grid-template-rows: 28px 30px 34px 36px 32px 116px 28px 30px 30px;
    margin-top: -5px;
}

.contact {
    grid-template-rows: 34px 36px 222px 38px;
    margin-top: -4px;
}

.req {
    font-weight: bold;
}

.fields input[type="text"], .fields textarea, .fields select {
    display: block;
    width: 100%;
    height: 21px;
    padding: 0 3px;
    border: 1px solid #8d9aa6;
    border-radius: 1px;
    background: #fff;
    outline: 0;
}

.fields input.readonly {
    background: #e9eaeb;
    border-color: #7d96ab;
}

.fields textarea {
    height: 111px;
    padding: 3px;
    line-height: 15px;
    resize: none;
}

.fields textarea.off {
    height: 207px;
}

.fields input.off, .fields textarea.off, .fields .off select {
    border-color: #c6cdd4;
    background: #fafafa;
}

.off select:disabled {
    color: #9a9a9a;
    opacity: 1;
}

::placeholder {
    color: #c3c3c3;
}

.combo {
    position: relative;
}

.combo select {
    appearance: none;
    width: 100%;
    padding: 0 3px;
    color: inherit;
}

.combo::before {
    content: "";
    position: absolute;
    top: 1px;
    right: 1px;
    bottom: 1px;
    width: 17px;
    background: linear-gradient(rgba(217, 233, 245, .7), rgba(145, 186, 220, .7));
    pointer-events: none;
}

.combo::after {
    content: "";
    position: absolute;
    top: 50%;
    right: 7px;
    margin-top: -2px;
    border: 3px solid transparent;
    border-top: 4px solid #222;
    border-bottom: 0;
    pointer-events: none;
}

.line {
    display: flex;
    align-items: center;
    gap: 4px;
}

.line.wide {
    gap: 12px;
}

.line .combo {
    flex: 1;
}

.icon-btn {
    justify-content: center;
    width: 22px;
    height: 22px;
    background: linear-gradient(#e2e0ee, #cdcadf);
}

.icon-btn svg {
    width: 16px;
    height: 16px;
}

.cal-btn svg {
    width: 18px;
    height: 18px;
}

.cal-btn.off {
    opacity: .5;
}

.fields .line .time {
    flex: 0 0 46px;
    text-align: center;
}

.scope {
    display: flex;
    align-items: center;
    justify-content: space-between;
    height: 26px;
    padding: 0 5px 0 4px;
    border: 2px solid #f6f6f6;
    border-radius: 6px;
}

.scope label {
    display: flex;
    align-items: center;
    gap: 4px;
}

input[type="radio"] {
    appearance: none;
    width: 13px;
    height: 13px;
    border: 1px solid #858b90;
    border-radius: 50%;
    background: linear-gradient(#fff, #e4e6e8);
}

input[type="radio"]:checked {
    background: radial-gradient(#222 0, #222 2px, #eee 3px);
}

.btn {
    justify-content: center;
    gap: 8px;
    width: 120px;
    height: 27px;
    background: linear-gradient(#e8e7f2, #cbc8df);
    font-size: 11px;
}

.done {
    grid-column: 1 / -1;
    width: auto;
    margin: 0 9px;
}

.form-foot {
    display: flex;
    gap: 12px;
    padding: 7px 3px 10px 12px;
}

.submit {
    display: flex;
    gap: 15px;
    margin-left: auto;
}

.btn svg {
    width: 17px;
    height: 17px;
}

.btn.mid {
    width: 131px;
}

.step {
    justify-content: center;
    width: 25px;
    height: 28px;
    padding-top: 8px;
    background: #d9d8de;
    color: #888;
    font-size: 12px;
}
```
